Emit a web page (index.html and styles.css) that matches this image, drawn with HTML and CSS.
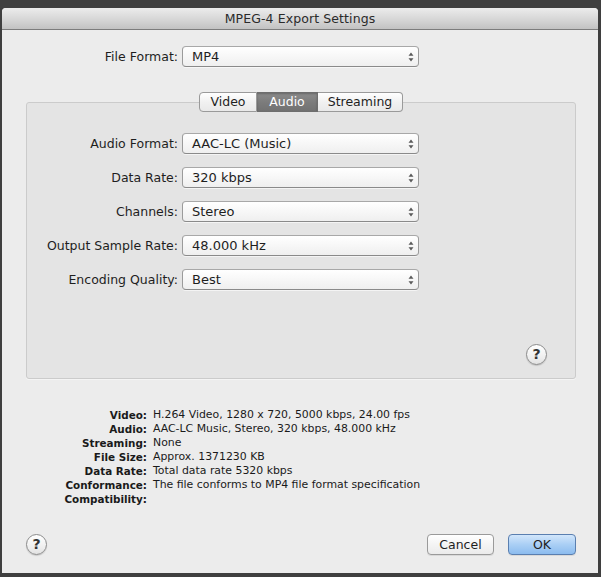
FILE: index.html
```html
<!DOCTYPE html>
<html>
<head>
<meta charset="utf-8">
<link rel="stylesheet" href="styles.css">
</head>
<body>
<div class="window">
  <div class="titlebar">MPEG-4 Export Settings</div>
  <div class="content">
    <div class="row top-row">
      <span class="label">File Format:</span>
      <div class="popup"><span>MP4</span><svg class="arrows" width="6" height="10" viewBox="0 0 6 10"><path d="M3 0.5 L5.5 3.8 L0.5 3.8 Z M3 9.5 L5.5 6.2 L0.5 6.2 Z" fill="#5a5a5a"/></svg></div>
    </div>

    <div class="tabs">
      <div class="tab">Video</div>
      <div class="tab selected">Audio</div>
      <div class="tab">Streaming</div>
    </div>
    <div class="box">
      <div class="form">
        <span class="label">Audio Format:</span>
        <div class="popup"><span>AAC-LC (Music)</span><svg class="arrows" width="6" height="10" viewBox="0 0 6 10"><path d="M3 0.5 L5.5 3.8 L0.5 3.8 Z M3 9.5 L5.5 6.2 L0.5 6.2 Z" fill="#5a5a5a"/></svg></div>
        <span class="label">Data Rate:</span>
        <div class="popup"><span>320 kbps</span><svg class="arrows" width="6" height="10" viewBox="0 0 6 10"><path d="M3 0.5 L5.5 3.8 L0.5 3.8 Z M3 9.5 L5.5 6.2 L0.5 6.2 Z" fill="#5a5a5a"/></svg></div>
        <span class="label">Channels:</span>
        <div class="popup"><span>Stereo</span><svg class="arrows" width="6" height="10" viewBox="0 0 6 10"><path d="M3 0.5 L5.5 3.8 L0.5 3.8 Z M3 9.5 L5.5 6.2 L0.5 6.2 Z" fill="#5a5a5a"/></svg></div>
        <span class="label">Output Sample Rate:</span>
        <div class="popup"><span>48.000 kHz</span><svg class="arrows" width="6" height="10" viewBox="0 0 6 10"><path d="M3 0.5 L5.5 3.8 L0.5 3.8 Z M3 9.5 L5.5 6.2 L0.5 6.2 Z" fill="#5a5a5a"/></svg></div>
        <span class="label">Encoding Quality:</span>
        <div class="popup"><span>Best</span><svg class="arrows" width="6" height="10" viewBox="0 0 6 10"><path d="M3 0.5 L5.5 3.8 L0.5 3.8 Z M3 9.5 L5.5 6.2 L0.5 6.2 Z" fill="#5a5a5a"/></svg></div>
      </div>
      <div class="box-foot">
        <div class="help">?</div>
      </div>
    </div>

    <div class="info">
      <b>Video:</b><span>H.264 Video, 1280 x 720, 5000 kbps, 24.00 fps</span>
      <b>Audio:</b><span>AAC-LC Music, Stereo, 320 kbps, 48.000 kHz</span>
      <b>Streaming:</b><span>None</span>
      <b>File Size:</b><span>Approx. 1371230 KB</span>
      <b>Data Rate:</b><span>Total data rate 5320 kbps</span>
      <b>Conformance:</b><span>The file conforms to MP4 file format specification</span>
      <b>Compatibility:</b><span></span>
    </div>

    <div class="footer">
      <div class="help">?</div>
      <div class="buttons">
        <div class="button">Cancel</div>
        <div class="button default">OK</div>
      </div>
    </div>
  </div>
</div>
</body>
</html>
```

FILE: styles.css
```css
html, body {
  margin: 0;
  padding: 0;
  background: #3f3f3f;
  width: 601px;
  height: 577px;
  overflow: hidden;
  font-family: "DejaVu Sans", "Open Sans", sans-serif;
  color: #1e1e1e;
}

.window {
  margin: 8px 3px 0 2px;
  width: 596px;
  height: 565px;
  background: #ececec;
  border-radius: 4px 4px 0 0;
  display: flex;
  flex-direction: column;
  overflow: hidden;
}

.titlebar {
  height: 21px;
  line-height: 22px;
  text-align: center;
  font-size: 12.5px;
  color: #2a2a2a;
  background: linear-gradient(#ececec, #d4d4d4 60%, #c2c2c2);
  border-bottom: 1px solid #7c7c7c;
  letter-spacing: 0.1px;
}

.content {
  flex: 1;
  display: flex;
  flex-direction: column;
}

.row {
  display: flex;
  align-items: center;
}

.top-row {
  margin-top: 16px;
}

.top-row .label {
  width: 176px;
}

.label {
  font-size: 12.5px;
  text-align: right;
  white-space: nowrap;
}

.popup {
  box-sizing: border-box;
  width: 237px;
  height: 21px;
  margin-left: 4px;
  border: 1px solid #9b9b9b;
  border-top-color: #a8a8a8;
  border-bottom-color: #8a8a8a;
  border-radius: 4px;
  background: linear-gradient(#ffffff, #f7f7f7 50%, #efefef);
  display: flex;
  align-items: center;
  justify-content: space-between;
  padding: 0 4px 0 9px;
  font-size: 13px;
  box-shadow: 0 1px 0 rgba(255,255,255,0.6);
}

.arrows {
  display: block;
}

.tabs {
  display: flex;
  justify-content: center;
  margin-top: 25px;
  margin-left: 2px;
  position: relative;
  z-index: 1;
}

.tab {
  box-sizing: border-box;
  height: 20px;
  line-height: 18px;
  padding: 0;
  font-size: 12.5px;
  text-align: center;
  border: 1px solid #9a9a9a;
  border-left: none;
  background: linear-gradient(#ffffff, #f1f1f1 50%, #e9e9e9);
  color: #1e1e1e;
}

.tab:nth-child(1) {
  width: 58px;
  border-left: 1px solid #9a9a9a;
  border-radius: 4px 0 0 4px;
}

.tab:nth-child(2) {
  width: 61px;
}

.tab:nth-child(3) {
  width: 85px;
  border-radius: 0 4px 4px 0;
}

.tab.selected {
  background: linear-gradient(#8c8c8c, #7c7c7c 50%, #727272);
  color: #ffffff;
  border-color: #6e6e6e;
  box-shadow: inset 0 1px 2px rgba(0,0,0,0.25);
}

.box {
  box-sizing: border-box;
  margin: -10px 0 0 24px;
  width: 550px;
  height: 277px;
  border: 1px solid #cbcbcb;
  border-radius: 3px;
  background: #e4e4e4;
  display: flex;
  flex-direction: column;
  box-shadow: 0 1px 0 #f4f4f4;
}

.form {
  display: grid;
  grid-template-columns: 151px 237px;
  column-gap: 4px;
  row-gap: 13px;
  margin-top: 30px;
  align-items: center;
}

.form .popup {
  margin-left: 0;
}

.box-foot {
  flex: 1;
  display: flex;
  justify-content: flex-end;
  align-items: flex-end;
  padding: 0 28px 13px 0;
}

.help {
  box-sizing: border-box;
  width: 21px;
  height: 21px;
  border-radius: 50%;
  border: 1px solid #8c8c8c;
  background: linear-gradient(#ffffff, #f0f0f0 60%, #e2e2e2);
  font-size: 14px;
  font-weight: bold;
  color: #333;
  text-align: center;
  line-height: 19px;
  box-shadow: 0 1px 1px rgba(0,0,0,0.15);
}

.info {
  display: grid;
  grid-template-columns: 145px auto;
  column-gap: 6px;
  margin-top: 29px;
  font-size: 10.9px;
  line-height: 14px;
  color: #1a1a1a;
}

.info b {
  text-align: right;
  font-weight: bold;
  font-size: 10.4px;
}

.footer {
  display: flex;
  justify-content: space-between;
  align-items: center;
  margin-top: 28px;
  padding: 0 22px 0 24px;
}

.buttons {
  display: flex;
  gap: 14px;
}

.button {
  box-sizing: border-box;
  height: 21px;
  line-height: 19px;
  font-size: 12.5px;
  text-align: center;
  border: 1px solid #9a9a9a;
  border-radius: 4px;
  background: linear-gradient(#ffffff, #f4f4f4 50%, #ebebeb);
  width: 67px;
  box-shadow: 0 1px 0 rgba(0,0,0,0.08);
}

.button.default {
  width: 68px;
  border-color: #5a7fb0;
  background: linear-gradient(#d2e6fb, #aacff5 50%, #8cbcef);
}
```
